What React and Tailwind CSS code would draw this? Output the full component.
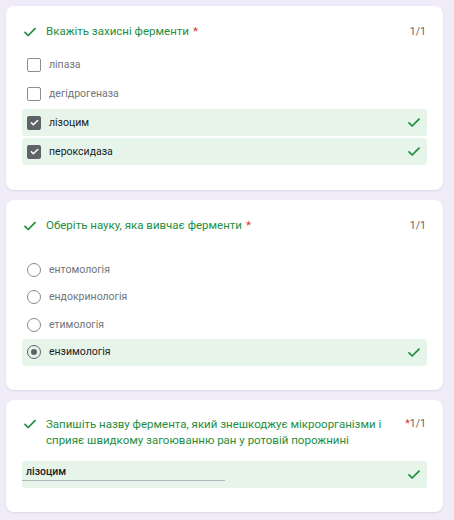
import React from "react";

const Tick = ({ className = "" }) => (
  <svg viewBox="0 0 12 9" className={className} fill="none" stroke="currentColor" strokeWidth="1.7" strokeLinecap="round" strokeLinejoin="round">
    <path d="M1 4.8l3.2 3.2L11 1.2" />
  </svg>
);

const CheckBox = ({ checked }) =>
  checked ? (
    <span className="w-[14px] h-[14px] rounded-[2px] bg-[#5f6368] flex items-center justify-center shrink-0">
      <svg viewBox="0 0 24 24" className="w-[11px] h-[11px]" fill="none" stroke="white" strokeWidth="3.2" strokeLinecap="round" strokeLinejoin="round">
        <path d="M5 12.5l4.5 4.5L19 7.5" />
      </svg>
    </span>
  ) : (
    <span className="w-[14px] h-[14px] rounded-[2px] border-[1.5px] border-[#8a8d91] shrink-0" />
  );

const Radio = ({ checked }) => (
  <span
    className={`w-[14px] h-[14px] rounded-full border-[1.5px] flex items-center justify-center shrink-0 ${
      checked ? "border-[#5f6368]" : "border-[#868a8e]"
    }`}
  >
    {checked && <span className="w-[6px] h-[6px] rounded-full bg-[#5f6368]" />}
  </span>
);

const Option = ({ label, selected, children }) => (
  <div
    className={`h-[27px] flex items-center pl-[5px] pr-[7px] rounded-[3px] ${
      selected ? "bg-[#e6f4ea]" : ""
    }`}
  >
    {children}
    <span className={`ml-[8px] text-[10.5px] ${selected ? "text-[#202124]" : "text-[#70757a]"}`}>{label}</span>
    {selected && <Tick className="ml-auto w-[12px] h-[9px] text-[#1e8e3e]" />}
  </div>
);

const Title = ({ text }) => (
  <div className="flex items-start">
    <Tick className="w-[12px] h-[10px] text-[#1e8e3e] mt-[4px] ml-[2px] shrink-0" />
    <div className="ml-[10px] text-[11.5px] leading-[17px] text-[#1e8e3e] flex-1">
      {text}
      <span className="text-[#d93025] ml-[4px]">*</span>
    </div>
    <span className="text-[10.5px] leading-[17px] text-[#5f6368] mr-[1px]">1/1</span>
  </div>
);

const Card = ({ children, className = "" }) => (
  <div className={`bg-white rounded-[8px] shadow-[0_1px_2px_rgba(60,64,67,0.12)] px-[16px] ${className}`}>
    {children}
  </div>
);

export default function App() {
  return (
    <div className="w-[454px] h-[520px] bg-[#f0ebf8] pt-[6px] pl-[6px] pr-[11px] flex flex-col gap-[10px]" style={{ fontFamily: "Roboto, 'Noto Sans', sans-serif" }}>
      <Card className="pt-[17px] pb-[25px]">
        <Title text="Вкажіть захисні ферменти" />
        <div className="mt-[11px] flex flex-col gap-[2px]">
          <Option label="ліпаза"><CheckBox /></Option>
          <Option label="дегідрогеназа"><CheckBox /></Option>
          <Option label="лізоцим" selected><CheckBox checked /></Option>
          <Option label="пероксидаза" selected><CheckBox checked /></Option>
        </div>
      </Card>

      <Card className="pt-[17px] pb-[24px]">
        <Title text="Оберіть науку, яка вивчає ферменти" />
        <div className="mt-[22px] flex flex-col gap-[0.5px]">
          <Option label="ентомологія"><Radio /></Option>
          <Option label="ендокринологія"><Radio /></Option>
          <Option label="етимологія"><Radio /></Option>
          <Option label="ензимологія" selected><Radio checked /></Option>
        </div>
      </Card>

      <Card className="pt-[16px] pb-[24px]">
        <div className="flex items-start">
          <Tick className="w-[12px] h-[10px] text-[#1e8e3e] mt-[3px] ml-[2px] shrink-0" />
          <div className="ml-[10px] text-[11.5px] leading-[16px] text-[#1e8e3e] flex-1 pr-[10px]">
            Запишіть назву фермента, який знешкоджує мікроорганізми і сприяє швидкому загоюванню ран у ротовій порожнині
          </div>
          <span className="text-[10.5px] leading-[16px] text-[#5f6368] mr-[1px]">
            <span className="text-[#d93025]">*</span>1/1
          </span>
        </div>
        <div className="mt-[13px] h-[27px] bg-[#e6f4ea] rounded-[3px] flex items-start pr-[7px]">
          <div className="mt-[4px] w-[203px] h-[16px] flex items-center pl-[4px] border-b border-[#b5b9bd]">
            <span className="text-[10.5px] text-[#202124] font-medium">лізоцим</span>
          </div>
          <Tick className="ml-auto mt-[9px] w-[12px] h-[9px] text-[#1e8e3e]" />
        </div>
      </Card>
    </div>
  );
}
